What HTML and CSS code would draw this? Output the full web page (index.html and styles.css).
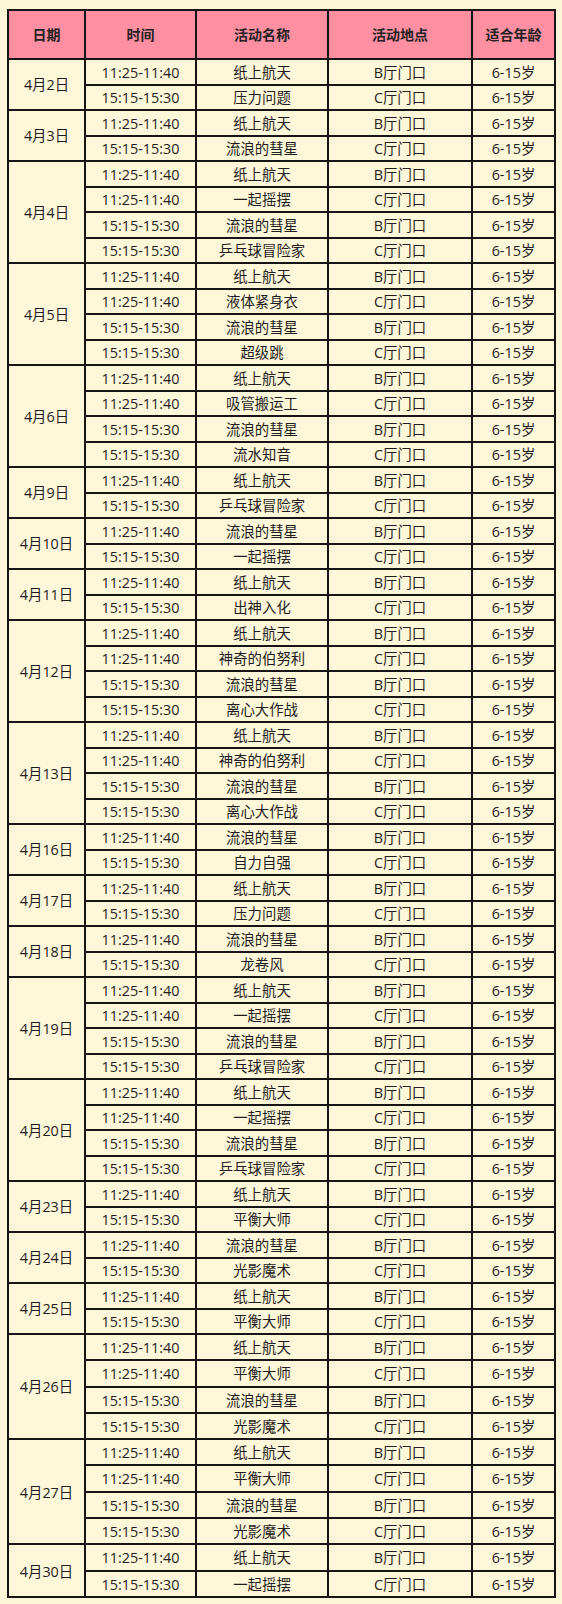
FILE: index.html
```html
<!DOCTYPE html>
<html lang="zh-CN">
<head>
<meta charset="utf-8">
<title>活动安排</title>
<link rel="stylesheet" href="styles.css">
</head>
<body>
<table class="schedule">
<colgroup><col class="c-date"><col class="c-time"><col class="c-name"><col class="c-place"><col class="c-age"></colgroup>
<thead>
<tr class="head"><th>日期</th><th>时间</th><th>活动名称</th><th>活动地点</th><th>适合年龄</th></tr>
</thead>
<tbody>
<tr><td rowspan="2">4月2日</td><td>11:25-11:40</td><td>纸上航天</td><td>B厅门口</td><td>6-15岁</td></tr>
<tr><td>15:15-15:30</td><td>压力问题</td><td>C厅门口</td><td>6-15岁</td></tr>
<tr><td rowspan="2">4月3日</td><td>11:25-11:40</td><td>纸上航天</td><td>B厅门口</td><td>6-15岁</td></tr>
<tr><td>15:15-15:30</td><td>流浪的彗星</td><td>C厅门口</td><td>6-15岁</td></tr>
<tr><td rowspan="4">4月4日</td><td>11:25-11:40</td><td>纸上航天</td><td>B厅门口</td><td>6-15岁</td></tr>
<tr><td>11:25-11:40</td><td>一起摇摆</td><td>C厅门口</td><td>6-15岁</td></tr>
<tr><td>15:15-15:30</td><td>流浪的彗星</td><td>B厅门口</td><td>6-15岁</td></tr>
<tr><td>15:15-15:30</td><td>乒乓球冒险家</td><td>C厅门口</td><td>6-15岁</td></tr>
<tr><td rowspan="4">4月5日</td><td>11:25-11:40</td><td>纸上航天</td><td>B厅门口</td><td>6-15岁</td></tr>
<tr><td>11:25-11:40</td><td>液体紧身衣</td><td>C厅门口</td><td>6-15岁</td></tr>
<tr><td>15:15-15:30</td><td>流浪的彗星</td><td>B厅门口</td><td>6-15岁</td></tr>
<tr><td>15:15-15:30</td><td>超级跳</td><td>C厅门口</td><td>6-15岁</td></tr>
<tr><td rowspan="4">4月6日</td><td>11:25-11:40</td><td>纸上航天</td><td>B厅门口</td><td>6-15岁</td></tr>
<tr><td>11:25-11:40</td><td>吸管搬运工</td><td>C厅门口</td><td>6-15岁</td></tr>
<tr><td>15:15-15:30</td><td>流浪的彗星</td><td>B厅门口</td><td>6-15岁</td></tr>
<tr><td>15:15-15:30</td><td>流水知音</td><td>C厅门口</td><td>6-15岁</td></tr>
<tr><td rowspan="2">4月9日</td><td>11:25-11:40</td><td>纸上航天</td><td>B厅门口</td><td>6-15岁</td></tr>
<tr><td>15:15-15:30</td><td>乒乓球冒险家</td><td>C厅门口</td><td>6-15岁</td></tr>
<tr><td rowspan="2">4月10日</td><td>11:25-11:40</td><td>流浪的彗星</td><td>B厅门口</td><td>6-15岁</td></tr>
<tr><td>15:15-15:30</td><td>一起摇摆</td><td>C厅门口</td><td>6-15岁</td></tr>
<tr><td rowspan="2">4月11日</td><td>11:25-11:40</td><td>纸上航天</td><td>B厅门口</td><td>6-15岁</td></tr>
<tr><td>15:15-15:30</td><td>出神入化</td><td>C厅门口</td><td>6-15岁</td></tr>
<tr><td rowspan="4">4月12日</td><td>11:25-11:40</td><td>纸上航天</td><td>B厅门口</td><td>6-15岁</td></tr>
<tr><td>11:25-11:40</td><td>神奇的伯努利</td><td>C厅门口</td><td>6-15岁</td></tr>
<tr><td>15:15-15:30</td><td>流浪的彗星</td><td>B厅门口</td><td>6-15岁</td></tr>
<tr><td>15:15-15:30</td><td>离心大作战</td><td>C厅门口</td><td>6-15岁</td></tr>
<tr><td rowspan="4">4月13日</td><td>11:25-11:40</td><td>纸上航天</td><td>B厅门口</td><td>6-15岁</td></tr>
<tr><td>11:25-11:40</td><td>神奇的伯努利</td><td>C厅门口</td><td>6-15岁</td></tr>
<tr><td>15:15-15:30</td><td>流浪的彗星</td><td>B厅门口</td><td>6-15岁</td></tr>
<tr><td>15:15-15:30</td><td>离心大作战</td><td>C厅门口</td><td>6-15岁</td></tr>
<tr><td rowspan="2">4月16日</td><td>11:25-11:40</td><td>流浪的彗星</td><td>B厅门口</td><td>6-15岁</td></tr>
<tr><td>15:15-15:30</td><td>自力自强</td><td>C厅门口</td><td>6-15岁</td></tr>
<tr><td rowspan="2">4月17日</td><td>11:25-11:40</td><td>纸上航天</td><td>B厅门口</td><td>6-15岁</td></tr>
<tr><td>15:15-15:30</td><td>压力问题</td><td>C厅门口</td><td>6-15岁</td></tr>
<tr><td rowspan="2">4月18日</td><td>11:25-11:40</td><td>流浪的彗星</td><td>B厅门口</td><td>6-15岁</td></tr>
<tr><td>15:15-15:30</td><td>龙卷风</td><td>C厅门口</td><td>6-15岁</td></tr>
<tr><td rowspan="4">4月19日</td><td>11:25-11:40</td><td>纸上航天</td><td>B厅门口</td><td>6-15岁</td></tr>
<tr><td>11:25-11:40</td><td>一起摇摆</td><td>C厅门口</td><td>6-15岁</td></tr>
<tr><td>15:15-15:30</td><td>流浪的彗星</td><td>B厅门口</td><td>6-15岁</td></tr>
<tr><td>15:15-15:30</td><td>乒乓球冒险家</td><td>C厅门口</td><td>6-15岁</td></tr>
<tr><td rowspan="4">4月20日</td><td>11:25-11:40</td><td>纸上航天</td><td>B厅门口</td><td>6-15岁</td></tr>
<tr><td>11:25-11:40</td><td>一起摇摆</td><td>C厅门口</td><td>6-15岁</td></tr>
<tr><td>15:15-15:30</td><td>流浪的彗星</td><td>B厅门口</td><td>6-15岁</td></tr>
<tr><td>15:15-15:30</td><td>乒乓球冒险家</td><td>C厅门口</td><td>6-15岁</td></tr>
<tr><td rowspan="2">4月23日</td><td>11:25-11:40</td><td>纸上航天</td><td>B厅门口</td><td>6-15岁</td></tr>
<tr><td>15:15-15:30</td><td>平衡大师</td><td>C厅门口</td><td>6-15岁</td></tr>
<tr><td rowspan="2">4月24日</td><td>11:25-11:40</td><td>流浪的彗星</td><td>B厅门口</td><td>6-15岁</td></tr>
<tr><td>15:15-15:30</td><td>光影魔术</td><td>C厅门口</td><td>6-15岁</td></tr>
<tr><td rowspan="2">4月25日</td><td>11:25-11:40</td><td>纸上航天</td><td>B厅门口</td><td>6-15岁</td></tr>
<tr><td>15:15-15:30</td><td>平衡大师</td><td>C厅门口</td><td>6-15岁</td></tr>
<tr class="tall"><td rowspan="4">4月26日</td><td>11:25-11:40</td><td>纸上航天</td><td>B厅门口</td><td>6-15岁</td></tr>
<tr class="tall"><td>11:25-11:40</td><td>平衡大师</td><td>C厅门口</td><td>6-15岁</td></tr>
<tr class="tall"><td>15:15-15:30</td><td>流浪的彗星</td><td>B厅门口</td><td>6-15岁</td></tr>
<tr class="tall"><td>15:15-15:30</td><td>光影魔术</td><td>C厅门口</td><td>6-15岁</td></tr>
<tr class="tall"><td rowspan="4">4月27日</td><td>11:25-11:40</td><td>纸上航天</td><td>B厅门口</td><td>6-15岁</td></tr>
<tr class="tall"><td>11:25-11:40</td><td>平衡大师</td><td>C厅门口</td><td>6-15岁</td></tr>
<tr class="tall"><td>15:15-15:30</td><td>流浪的彗星</td><td>B厅门口</td><td>6-15岁</td></tr>
<tr class="tall"><td>15:15-15:30</td><td>光影魔术</td><td>C厅门口</td><td>6-15岁</td></tr>
<tr class="tall"><td rowspan="2">4月30日</td><td>11:25-11:40</td><td>纸上航天</td><td>B厅门口</td><td>6-15岁</td></tr>
<tr class="tall"><td>15:15-15:30</td><td>一起摇摆</td><td>C厅门口</td><td>6-15岁</td></tr>
</tbody>
</table>
</body>
</html>
```
FILE: styles.css
```css
html, body {
  margin: 0;
  padding: 0;
  background: #fdf6d8;
}
body {
  padding: 9px 0 0 7px;
  font-family: "Open Sans", "Noto Sans CJK SC", sans-serif;
  color: #1e1e1e;
}
.schedule {
  border-collapse: collapse;
  table-layout: fixed;
  width: 547px;
  background: #fff7d9;
  font-size: 14.4px;
  line-height: 1.2;
}
.c-date { width: 77px; }
.c-time { width: 111px; }
.c-name { width: 132px; }
.c-place { width: 144px; }
.c-age { width: 83px; }
.schedule th,
.schedule td {
  border: 2px solid #151515;
  text-align: center;
  vertical-align: middle;
  padding: 1px 0 0;
}
.schedule th {
  background: #ff8fa1;
  font-weight: bold;
  font-size: 14px;
  color: #222;
}
.head {
  height: 49px;
}
.schedule tbody tr {
  height: 25.5px;
}
.schedule tbody tr.tall {
  height: 26.3px;
}
```
